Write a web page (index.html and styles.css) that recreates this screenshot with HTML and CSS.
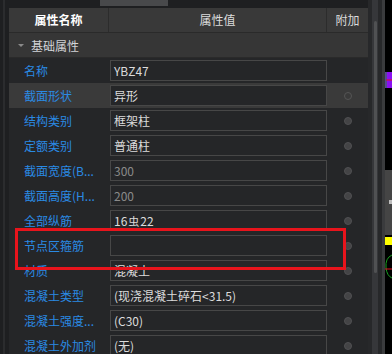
FILE: index.html
```html
<!DOCTYPE html>
<html lang="zh">
<head>
<meta charset="utf-8">
<link rel="stylesheet" href="styles.css">
</head>
<body>
<div class="app">
  <div class="edge"><div class="edge-line"></div></div>
  <div class="panel">
    <div class="topbar"><div class="topbar-thumb"></div></div>
    <div class="thead">
      <div class="th th-name">属性名称</div>
      <div class="th th-val">属性值</div>
      <div class="th th-add">附加</div>
    </div>
    <div class="group"><span class="caret"></span><span>基础属性</span></div>
    <div class="row">
      <div class="label">名称</div>
      <div class="cell"><div class="box">YBZ47</div></div>
      <div class="extra"></div>
    </div>
    <div class="row row-hover">
      <div class="label">截面形状</div>
      <div class="cell"><div class="box">异形</div></div>
      <div class="extra"><span class="dot"></span></div>
    </div>
    <div class="row">
      <div class="label">结构类别</div>
      <div class="cell"><div class="box">框架柱</div></div>
      <div class="extra"><span class="dot"></span></div>
    </div>
    <div class="row">
      <div class="label">定额类别</div>
      <div class="cell"><div class="box">普通柱</div></div>
      <div class="extra"><span class="dot"></span></div>
    </div>
    <div class="row">
      <div class="label">截面宽度(B...</div>
      <div class="cell"><div class="box box-disabled">300</div></div>
      <div class="extra"><span class="dot"></span></div>
    </div>
    <div class="row">
      <div class="label">截面高度(H...</div>
      <div class="cell"><div class="box box-disabled">200</div></div>
      <div class="extra"><span class="dot"></span></div>
    </div>
    <div class="row">
      <div class="label">全部纵筋</div>
      <div class="cell"><div class="box">16<span class="rebar">虫</span>22</div></div>
      <div class="extra"><span class="dot"></span></div>
    </div>
    <div class="row">
      <div class="label">节点区箍筋</div>
      <div class="cell"><div class="box"></div></div>
      <div class="extra"><span class="dot"></span></div>
    </div>
    <div class="row">
      <div class="label">材质</div>
      <div class="cell"><div class="box">混凝土</div></div>
      <div class="extra"><span class="dot"></span></div>
    </div>
    <div class="row">
      <div class="label">混凝土类型</div>
      <div class="cell"><div class="box">(现浇混凝土碎石&lt;31.5)</div></div>
      <div class="extra"><span class="dot"></span></div>
    </div>
    <div class="row">
      <div class="label">混凝土强度...</div>
      <div class="cell"><div class="box">(C30)</div></div>
      <div class="extra"><span class="dot"></span></div>
    </div>
    <div class="row">
      <div class="label">混凝土外加剂</div>
      <div class="cell"><div class="box">(无)</div></div>
      <div class="extra"><span class="dot"></span></div>
    </div>
  </div>
  <div class="gap"></div>
  <div class="vscroll"><div class="vthumb"></div></div>
  <div class="gap"></div>
  <div class="divider"></div>
  <div class="viewport">
    <svg width="7" height="354" viewBox="0 0 7 354">
      <rect x="0" y="72" width="7" height="16" fill="#8a10f0"/>
      <path d="M1 72 V88" stroke="#1f8a2a" stroke-width="1"/>
      <path d="M1 80 H7" stroke="#e01020" stroke-width="1"/>
      <rect x="0" y="170" width="7" height="65" fill="#454545"/>
      <rect x="4" y="200" width="3" height="4" fill="#bdbdbd"/>
      <rect x="0" y="237" width="7" height="8" fill="#ffff00"/>
      <path d="M7 255 Q0 258 1 268 Q2 276 7 278" fill="none" stroke="#18a020" stroke-width="1"/>
      <path d="M0 269 H7" stroke="#e01020" stroke-width="1"/>
    </svg>
  </div>
  <div class="callout"></div>
</div>
</body>
</html>
```

FILE: styles.css
```css
html, body {
  margin: 0;
  padding: 0;
  background: #1e1f21;
  overflow: hidden;
}

.app {
  position: relative;
  width: 392px;
  height: 354px;
  display: flex;
  overflow: hidden;
  font-family: "Noto Sans CJK SC", "Noto Sans", sans-serif;
  font-size: 12px;
  background: #1e1f21;
}

.edge {
  width: 9px;
  flex: none;
  display: flex;
  padding-left: 3px;
  box-sizing: border-box;
}

.edge-line {
  width: 2px;
  background: #2b2c2e;
}

.panel {
  width: 359px;
  flex: none;
  display: flex;
  flex-direction: column;
  background: #252628;
}

.topbar {
  height: 8px;
  flex: none;
  background: #1e1f21;
  padding-left: 91px;
}

.topbar-thumb {
  width: 68px;
  height: 6px;
  background: #48494b;
}

.thead {
  height: 24px;
  flex: none;
  display: grid;
  grid-template-columns: 100px 218px 41px;
  background: #393939;
  border-bottom: 1px solid #2a2a2a;
}

.th {
  display: flex;
  align-items: center;
  justify-content: center;
  color: #dcdcdc;
  line-height: 1;
}

.th-name {
  color: #ffffff;
  font-weight: bold;
  border-right: 1px solid #2c2c2c;
}

.th-val {
  border-right: 1px solid #2c2c2c;
}

.group {
  height: 24px;
  flex: none;
  display: flex;
  align-items: center;
  gap: 7px;
  padding-left: 9px;
  background: #363636;
  color: #d2d4d8;
  border-bottom: 1px solid #2a2a2a;
}

.caret {
  width: 0;
  height: 0;
  border-left: 3px solid transparent;
  border-right: 3px solid transparent;
  border-top: 3px solid #8a8a8a;
  margin-top: 1px;
}

.row {
  height: 25px;
  flex: none;
  display: grid;
  grid-template-columns: 100px 218px 41px;
  align-items: center;
}

.row-hover {
  background: #3a3a3a;
}

.label {
  padding-left: 15px;
  color: #2a8ae4;
  white-space: nowrap;
  overflow: hidden;
}

.cell {
  padding-left: 1px;
}

.box {
  height: 21px;
  box-sizing: border-box;
  border: 1px solid #474747;
  background: #252628;
  color: #dcdcdc;
  padding-left: 3px;
  display: flex;
  align-items: center;
  white-space: nowrap;
  width: 217px;
}

.box-disabled {
  color: #8a8a8a;
}

.rebar {
  font-size: 11px;
  margin: 0 1px;
}

.extra {
  display: flex;
  align-items: center;
  justify-content: center;
  padding-left: 1px;
}

.dot {
  width: 8px;
  height: 8px;
  border-radius: 50%;
  box-sizing: border-box;
  background: #444446;
  border: 1px solid #505052;
}

.row-hover .dot {
  background: #3a3a3a;
  border-color: #555;
}

.gap {
  width: 4px;
  flex: none;
  background: #27282a;
}

.vscroll {
  width: 6px;
  flex: none;
  background: #36373a;
  padding: 21px 0 0 2px;
  box-sizing: border-box;
}

.vthumb {
  width: 3px;
  height: 252px;
  border-radius: 2px;
  background: #505153;
}

.divider {
  width: 3px;
  flex: none;
  background: #3a3b3d;
}

.viewport {
  width: 7px;
  flex: none;
  background: #000;
}

.viewport svg {
  display: block;
}

.callout {
  position: absolute;
  left: 15px;
  top: 228px;
  width: 331px;
  height: 42px;
  box-sizing: border-box;
  border: 3px solid #e8141c;
}
```
